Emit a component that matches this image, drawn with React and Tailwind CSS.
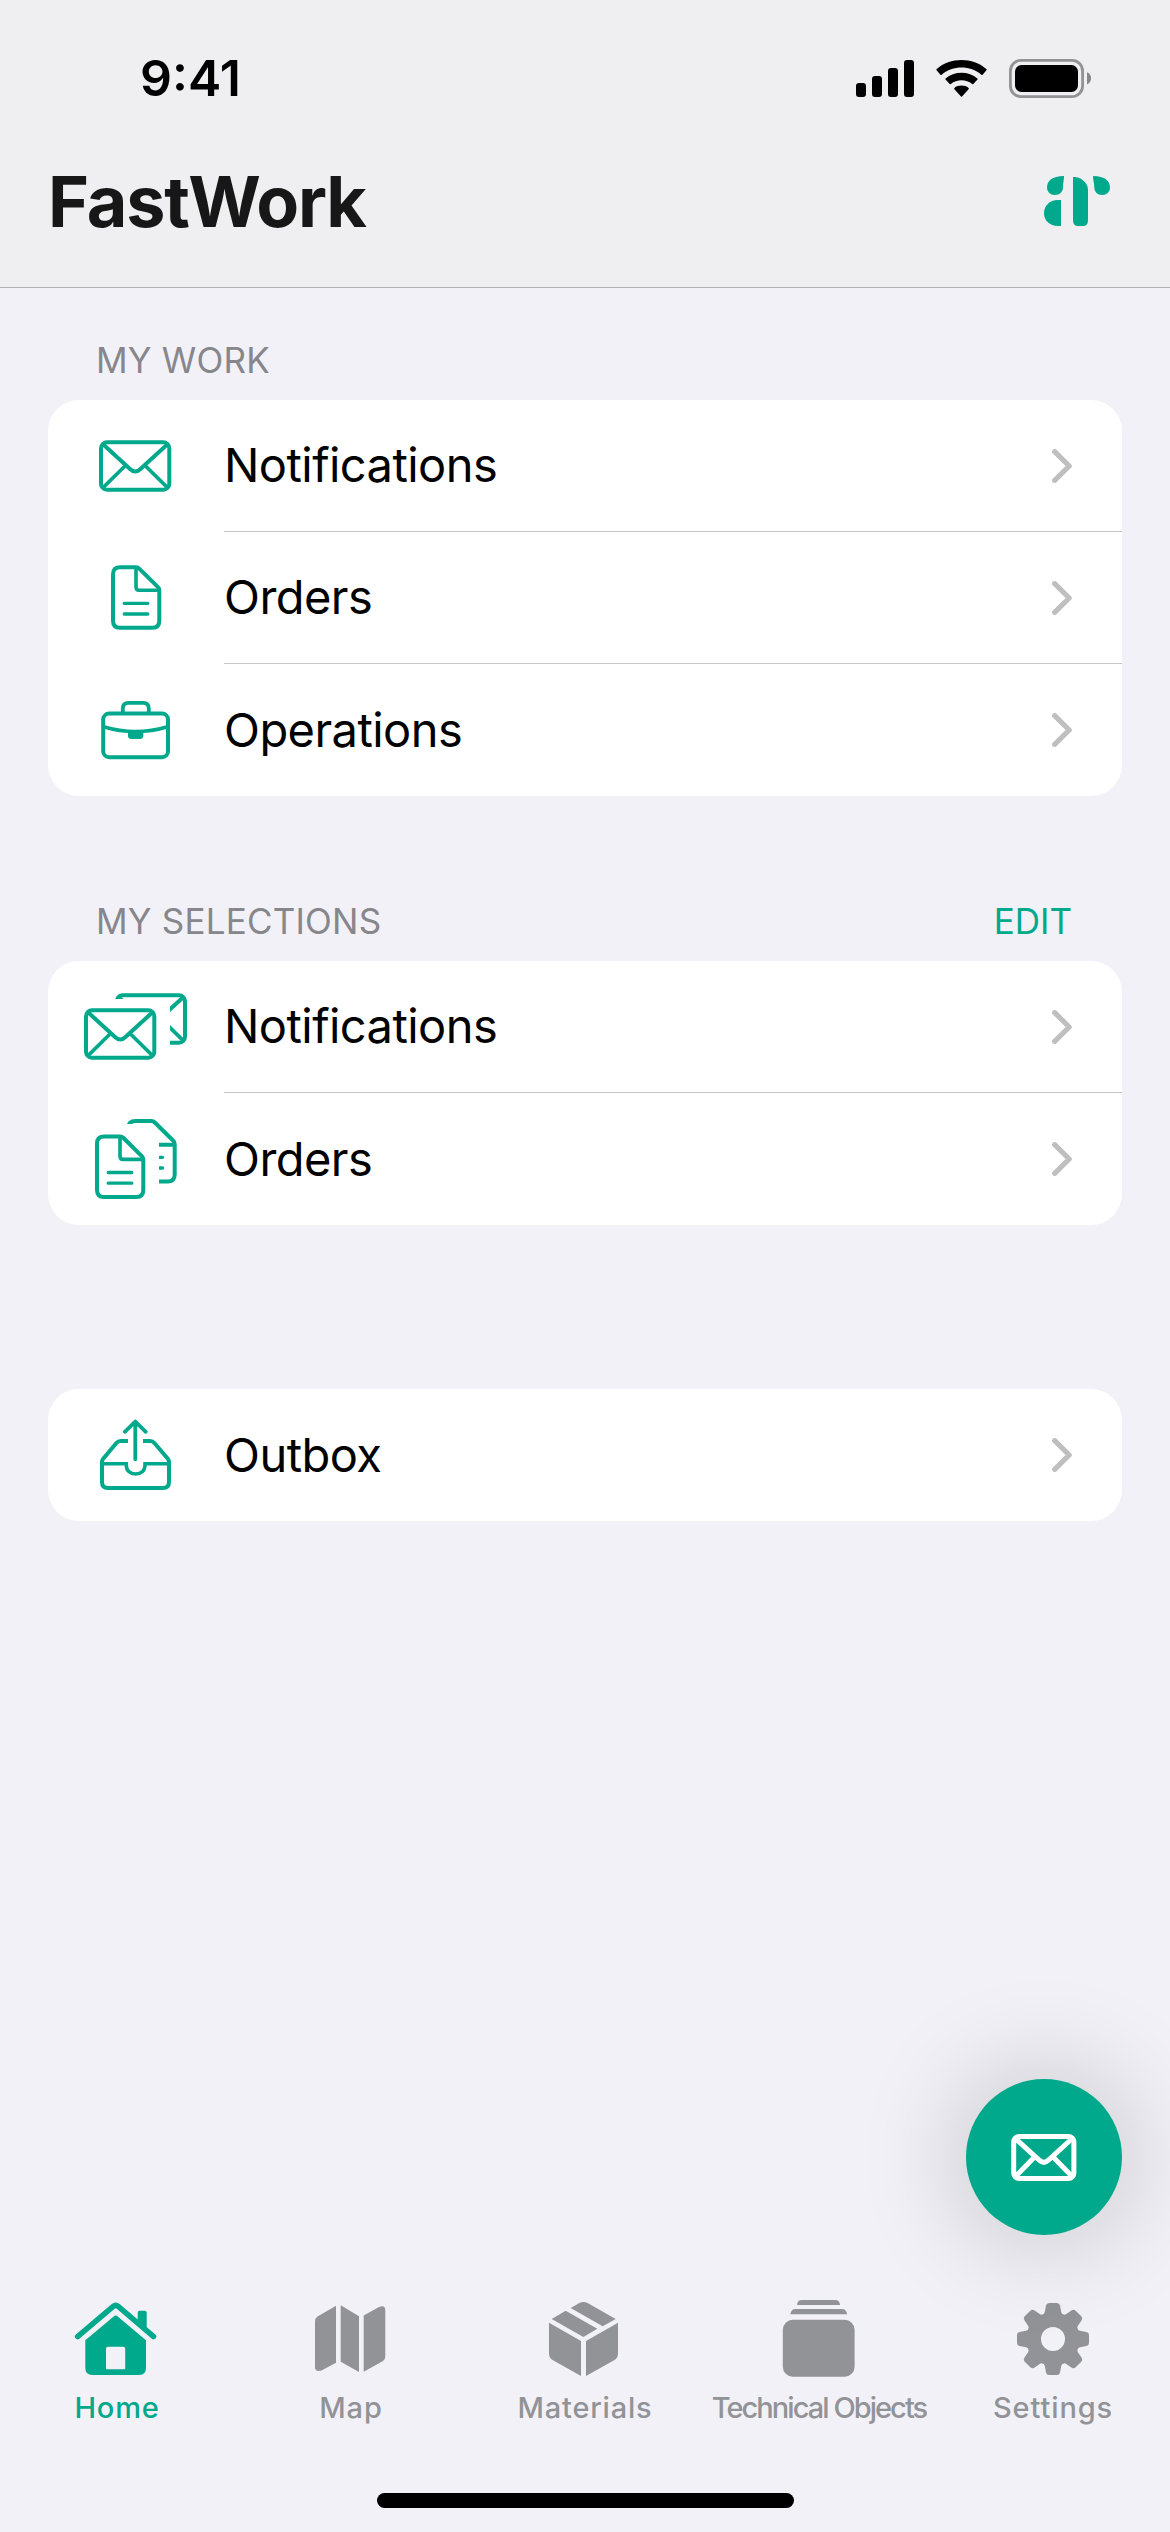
import React from 'react';

const Envelope = () => (
  <g>
    <rect x="53" y="42.3" width="68.3" height="47.4" rx="6" />
    <path d="M55 44.3 L82 69 Q87.2 74 92.4 69 L119.5 44.3" />
    <path d="M77 66 L55 87.6 M97.5 66 L119.5 87.6" strokeWidth="3.6" />
  </g>
);

const DocumentShape = () => (
  <g>
    <path d="M72.3 35.3 H88 Q90 35.3 91.5 36.8 L110 55.2 Q111.3 56.5 111.3 58.5 V88.7 Q111.3 95.7 104.3 95.7 H72 Q65 95.7 65 88.7 V42.3 Q65 35.3 72.3 35.3 Z" />
    <path d="M88 36 V55 Q88 58.2 91 58.2 H111" strokeWidth="3.6" />
    <path d="M76.2 71.3 H99.8 M76.2 82 H99.8" strokeWidth="3.3" />
  </g>
);

const RowIcon = ({ children }) => (
  <svg viewBox="0 0 176 132" className="w-[176px] h-[132px] shrink-0" fill="none" stroke="#00a98b" strokeWidth="4" strokeLinecap="round" strokeLinejoin="round">
    {children}
  </svg>
);

const EnvelopeIcon = () => (
  <RowIcon>
    <Envelope />
  </RowIcon>
);

const DocumentIcon = () => (
  <RowIcon>
    <DocumentShape />
  </RowIcon>
);

const BriefcaseIcon = () => (
  <RowIcon>
    <rect x="55.2" y="49.6" width="64.8" height="43.6" rx="6" />
    <path d="M74.8 49 V44.5 Q74.8 38.9 80.4 38.9 H95.2 Q100.8 38.9 100.8 44.5 V49" strokeWidth="3.8" />
    <path d="M55.5 62.7 Q87.6 72.4 119.7 62.7" strokeWidth="3.6" />
    <path d="M80 67 H95.3 V71.5 Q95.3 75 91.8 75 H83.5 Q80 75 80 71.5 Z" fill="#00a98b" stroke="none" />
  </RowIcon>
);

const EnvelopeStackIcon = () => (
  <RowIcon>
    <clipPath id="envelope-back">
      <path d="M0 0 H176 V132 H122 V38 H0 Z" />
    </clipPath>
    <g transform="translate(-15 7)">
      <Envelope />
    </g>
    <g clipPath="url(#envelope-back)">
      <g transform="translate(15.7 -8)">
        <Envelope />
      </g>
    </g>
  </RowIcon>
);

const DocumentStackIcon = () => (
  <RowIcon>
    <clipPath id="document-back">
      <path d="M0 0 H176 V132 H111 V45 L100 33 V31 H0 Z" />
    </clipPath>
    <g transform="translate(-16 8.2)">
      <DocumentShape />
    </g>
    <g clipPath="url(#document-back)">
      <path d="M87.6 28 H103.3 Q105.3 28 106.8 29.5 L125.3 47.7 Q126.7 49 126.7 51 V81.5 Q126.7 88.5 119.7 88.5 H87.3 Q80.3 88.5 80.3 81.5 V35 Q80.3 28 87.6 28 Z" />
      <path d="M106 51.8 H126" />
      <path d="M100 64.3 H114.5 M100 75 H114.5" strokeWidth="3.3" />
    </g>
  </RowIcon>
);

const OutboxIcon = () => (
  <RowIcon>
    <path d="M87.3 33 V70.3 M76.8 42.8 L87.3 32.6 L97.8 42.8" strokeWidth="3.8" />
    <path d="M80 52 H73 Q70 52 68.2 54.2 L55 70 Q54 71.3 54 73 V93 Q54 99 60 99 H115 Q121 99 121 93 V73 Q121 71.3 120 70 L106.6 54.2 Q104.8 52 101.8 52 H95" strokeLinecap="butt" />
    <path d="M54 74.7 H78.3 V76 C78.3 82 82.5 85 87.6 85 C92.8 85 97 82 97 76 V74.7 H121" strokeWidth="3.6" strokeLinejoin="miter" />
  </RowIcon>
);

const Chevron = () => (
  <svg viewBox="0 0 20 34" className="w-[20px] h-[34px] ml-auto mr-[50px]" fill="none" stroke="#bfbfbf" strokeWidth="5.2" strokeLinecap="round" strokeLinejoin="round">
    <path d="M2.7 2.7 L17.2 17 L2.7 31.3" />
  </svg>
);

const ListRow = ({ icon: Icon, label, last }) => (
  <li className="flex h-[132px]">
    <Icon />
    <div className={last ? 'flex flex-1 items-center' : 'flex flex-1 items-center border-b border-[#c6c6c8]'}>
      <span className="pb-[2px] text-[47px] leading-none text-black tracking-[-0.55px]">{label}</span>
      <Chevron />
    </div>
  </li>
);

const ListCard = ({ items }) => (
  <ul className="mx-[48px] rounded-[31px] bg-white overflow-hidden">
    {items.map((item, i) => (
      <ListRow key={item.label} {...item} last={i === items.length - 1} />
    ))}
  </ul>
);

const StatusBar = () => (
  <div className="flex h-[156px] items-center justify-between pl-[140px] pr-[79px]">
    <span className="text-[50px] font-semibold leading-none text-black">9:41</span>
    <div className="flex items-center gap-[22px]">
      <svg viewBox="0 0 58 39" className="w-[58px] h-[39px]">
        <rect x="0" y="24" width="10" height="14" rx="3" />
        <rect x="16" y="17" width="10" height="21" rx="3" />
        <rect x="32" y="9" width="10" height="29" rx="3" />
        <rect x="48" y="1" width="10" height="37" rx="3" />
      </svg>
      <svg viewBox="0 0 51 39" className="w-[51px] h-[39px]">
        <path d="M0.6 11.2 Q0 10.6 0.7 10 C14 -2 37 -2 50.3 10 Q51 10.6 50.4 11.2 L46.6 15.7 Q46 16.3 45.4 15.7 C34 6 17 6 5.6 15.7 Q5 16.3 4.4 15.7 Z" />
        <path d="M9.5 20.5 Q9 20 9.6 19.4 C18 11.8 33 11.8 41.4 19.4 Q42 20 41.5 20.5 L37.3 24.9 Q36.8 25.4 36.2 24.9 C30 20 21 20 14.8 24.9 Q14.2 25.4 13.7 24.9 Z" />
        <path d="M18.4 30.2 Q17.8 29.6 18.4 29 C22 25.8 29 25.8 32.6 29 Q33.2 29.6 32.6 30.2 L26 37.4 Q25.5 38 25 37.4 Z" />
      </svg>
      <svg viewBox="0 0 82 39" className="w-[82px] h-[39px]">
        <rect x="1.4" y="1.4" width="72.2" height="36.2" rx="10.5" fill="none" stroke="#939395" strokeWidth="2.8" />
        <rect x="6" y="6" width="63" height="27" rx="6.5" />
        <path d="M78 13.2 Q82 15 82 19.3 Q82 23.6 78 25.4 Z" fill="#87878a" />
      </svg>
    </div>
  </div>
);

const Logo = () => (
  <svg viewBox="0 0 66 52" className="w-[66px] h-[52px]" fill="#00a98b">
    <path d="M20 0 C8 0 3 5 3 11.5 C3 16 6.5 19 10.7 19 C16 19 19 15.5 19 11 C19 7 20 4 20 0 Z" />
    <path d="M17 24 H14 C5.5 24 0 30 0 37 C0 44.5 5.5 50 14 50 H17 Z" />
    <path d="M29 1 H31 C39 2 44 8 44 14 V44 Q44 50 39 50 H34 Q29 50 29 44 Z" />
    <path d="M49 0 C61 0 66 5 66 11.5 C66 16 62.5 19 58.5 19 C53 19 50.3 15.5 50.3 11 C50.3 7 49 4 49 0 Z" />
  </svg>
);

const TabIcon = ({ children }) => (
  <svg viewBox="0 0 234 100" className="w-[234px] h-[100px]" fill="currentColor">
    {children}
  </svg>
);

const HomeIcon = () => (
  <TabIcon>
    <path d="M77.6 46.6 L113.2 16.4 Q115.7 14.3 118.2 16.4 L153.6 46.6" fill="none" stroke="currentColor" strokeWidth="5.4" strokeLinecap="round" />
    <path d="M137.7 30 V22.7 Q137.7 20.7 139.7 20.7 H144.7 Q146.7 20.7 146.7 22.7 V40 Z" />
    <path fillRule="evenodd" d="M85.3 50.3 L113.7 26.4 Q115.7 24.8 117.7 26.4 L146 50.3 V78 Q146 85 139 85 H92.3 Q85.3 85 85.3 78 Z M108 56.7 Q106 56.7 106 58.7 V79.3 H125.2 V58.7 Q125.2 56.7 123.2 56.7 Z" />
  </TabIcon>
);

const MapIcon = () => (
  <TabIcon>
    <path d="M102 15.7 V72.7 L87.5 80.6 Q81 82.5 81 77 V31 Q81 28 83.5 26.5 Z" />
    <path d="M106.7 15.3 L125 26.3 V82 L106.7 71.7 Z" />
    <path d="M129.7 25.5 L145 17 Q151.3 14.5 151.3 20.5 V66.5 Q151.3 69.5 149 71 L129.7 81.8 Z" />
  </TabIcon>
);

const BoxIcon = () => (
  <TabIcon>
    <path d="M81 32.7 L113 51 V86 L84.5 70 Q81 67.5 81 63.5 Z" />
    <path d="M150 32.7 L118 51 V86 L146.5 70 Q150 67.5 150 63.5 Z" />
    <path d="M83.7 29 L97.7 20.7 L129.3 38.7 L115.4 47 Z" />
    <path d="M102.7 18 L111 13.2 Q115.5 10.8 120 13.2 L147.7 29 L134.7 36.2 Z" />
  </TabIcon>
);

const StackIcon = () => (
  <TabIcon>
    <path d="M95 15 Q95.5 10 99.5 10 H133.5 Q137.5 10 138 15 Z" />
    <path d="M88.3 24.3 Q89.3 19 93.5 19 H140 Q144.2 19 145.2 24.3 Z" />
    <rect x="80.8" y="29.8" width="71.8" height="57" rx="10" />
  </TabIcon>
);

const GearIcon = () => (
  <TabIcon>
    <g transform="translate(117 49)">
      <circle r="18.8" fill="none" stroke="currentColor" strokeWidth="13.6" />
      {[0, 45, 90, 135, 180, 225, 270, 315].map((angle) => (
        <path key={angle} transform={`rotate(${angle})`} d="M-11.5 -22 V-24 Q-8.6 -24.5 -8.2 -27 L-7 -33.5 Q-6.4 -36 -4 -36 H4 Q6.4 -36 7 -33.5 L8.2 -27 Q8.6 -24.5 11.5 -24 V-22 Z" />
      ))}
    </g>
  </TabIcon>
);

const workItems = [
  { icon: EnvelopeIcon, label: 'Notifications' },
  { icon: DocumentIcon, label: 'Orders' },
  { icon: BriefcaseIcon, label: 'Operations' },
];

const selectionItems = [
  { icon: EnvelopeStackIcon, label: 'Notifications' },
  { icon: DocumentStackIcon, label: 'Orders' },
];

const outboxItems = [{ icon: OutboxIcon, label: 'Outbox' }];

const tabs = [
  { icon: HomeIcon, label: 'Home', color: 'text-[#00a98b]', spacing: 'tracking-[0.8px]' },
  { icon: MapIcon, label: 'Map', color: 'text-[#929397]', spacing: 'tracking-[0.8px]' },
  { icon: BoxIcon, label: 'Materials', color: 'text-[#929397]', spacing: 'tracking-[0.8px]' },
  { icon: StackIcon, label: 'Technical Objects', color: 'text-[#929397]', spacing: 'tracking-[-1.95px]' },
  { icon: GearIcon, label: 'Settings', color: 'text-[#929397]', spacing: 'tracking-[0.9px]' },
];

const App = () => {
  return (
    <div className="relative flex h-[2532px] w-[1170px] flex-col overflow-hidden bg-[#f2f1f7] font-['Inter','Liberation_Sans',sans-serif]">
      <header className="h-[288px] border-b border-[#b2b1b6] bg-[#efeff2]">
        <StatusBar />
        <div className="flex h-[92px] items-center justify-between pl-[48px] pr-[60px]">
          <h1 className="text-[70px] font-bold leading-none text-[#171717] tracking-[-1.2px]">FastWork</h1>
          <Logo />
        </div>
      </header>

      <main className="flex-1">
        <section>
          <div className="flex h-[112px] items-end pb-[20px] pl-[96px]">
            <h2 className="text-[35px] leading-[39px] text-[#87868b] tracking-[0.2px]">MY WORK</h2>
          </div>
          <ListCard items={workItems} />
        </section>

        <section>
          <div className="flex h-[165px] items-end justify-between pb-[20px] pl-[96px] pr-[98px]">
            <h2 className="text-[35px] leading-[39px] text-[#87868b] tracking-[0.2px]">MY SELECTIONS</h2>
            <button type="button" className="text-[35px] leading-[39px] text-[#00a98b]">EDIT</button>
          </div>
          <ListCard items={selectionItems} />
        </section>

        <section className="pt-[164px]">
          <ListCard items={outboxItems} />
        </section>
      </main>

      <button type="button" className="absolute right-[48px] bottom-[297px] flex h-[156px] w-[156px] items-center justify-center rounded-full bg-[#00a98b] shadow-[0_0_108px_4px_rgba(0,0,0,0.2)]">
        <svg viewBox="0 0 66 47" className="w-[66px] h-[47px]" fill="none" stroke="#fff" strokeWidth="5" strokeLinecap="round" strokeLinejoin="round">
          <rect x="2.7" y="2.5" width="60.2" height="42" rx="5.5" />
          <path d="M5 5 L28.2 26.2 Q32.8 30.4 37.4 26.2 L60.6 5" />
          <path d="M23.5 23 L5 42 M42.1 23 L60.6 42" />
        </svg>
      </button>

      <nav className="h-[242px]">
        <ul className="flex">
          {tabs.map(({ icon: Icon, label, color, spacing }) => (
            <li key={label} className={`flex w-[234px] flex-col items-center ${color}`}>
              <Icon />
              <span className={`whitespace-nowrap text-[29px] font-medium leading-[35px] ${spacing}`}>{label}</span>
            </li>
          ))}
        </ul>
        <div className="mx-auto mt-[68px] h-[15px] w-[417px] rounded-full bg-black" />
      </nav>
    </div>
  );
};

export default App;
